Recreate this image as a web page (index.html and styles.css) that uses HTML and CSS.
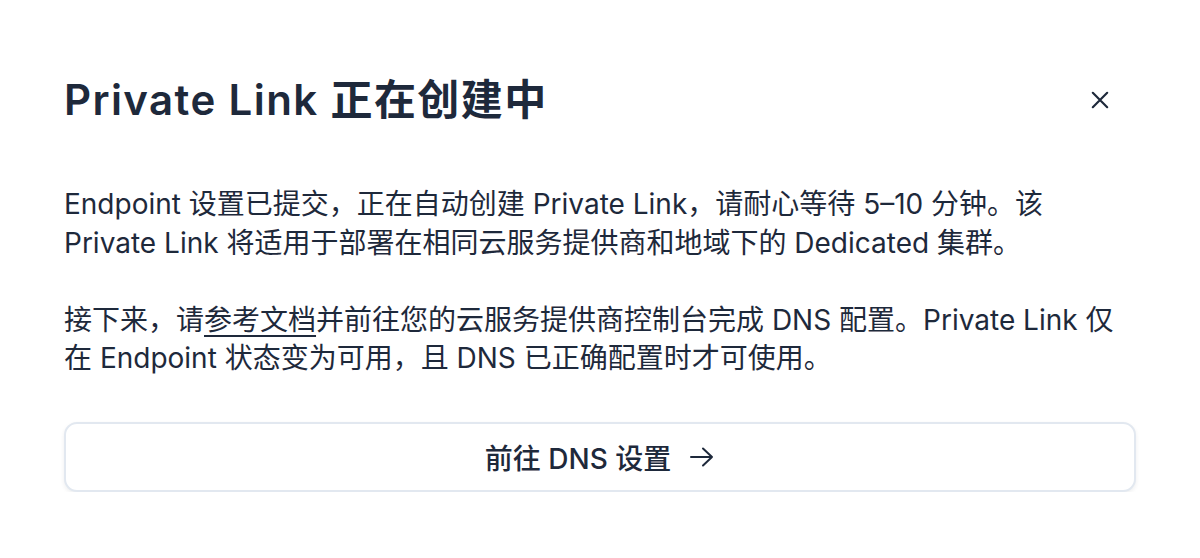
FILE: index.html
```html
<!DOCTYPE html>
<html lang="zh-CN">
<head>
<meta charset="utf-8">
<title>Private Link 正在创建中</title>
<link rel="stylesheet" href="styles.css">
</head>
<body>
<div class="dialog">
  <div class="header">
    <h1 class="title">Private Link 正在创建中</h1>
    <button class="close" aria-label="关闭">
      <svg width="20" height="20" viewBox="0 0 20 20" fill="none" stroke="currentColor" stroke-width="2.4" stroke-linecap="round"><path d="M2 2L18 18M18 2L2 18"/></svg>
    </button>
  </div>
  <div class="content">
    <p>Endpoint 设置已提交，正在自动创建 Private Link，请耐心等待 5–10 分钟。该 Private Link 将适用于部署在相同云服务提供商和地域下的 Dedicated 集群。</p>
    <p>接下来，请<a class="link" href="#">参考文档</a>并前往您的云服务提供商控制台完成 DNS 配置。Private Link 仅在 Endpoint 状态变为可用，且 DNS 已正确配置时才可使用。</p>
  </div>
  <button class="action">
    <span>前往 DNS 设置</span>
    <svg width="26" height="24" viewBox="0 0 26 24" fill="none" stroke="currentColor" stroke-width="2" stroke-linecap="round" stroke-linejoin="round"><path d="M2 12H23M14 3.5L23 12L14 20.5"/></svg>
  </button>
</div>
</body>
</html>
```
FILE: styles.css
```css
* { box-sizing: border-box; }
html, body {
  margin: 0;
  padding: 0;
  background: #ffffff;
}
body {
  font-family: Inter, "Noto Sans CJK SC", sans-serif;
  color: #1e293b;
}
.dialog {
  width: 1200px;
  padding: 0 64px;
}
.header {
  display: flex;
  align-items: center;
  justify-content: space-between;
  padding-top: 75px;
}
.title {
  margin: 0;
  font-size: 42px;
  line-height: 49px;
  font-weight: 600;
  color: #1e293b;
  letter-spacing: 1.4px;
}
.close {
  display: flex;
  align-items: center;
  justify-content: center;
  width: 42px;
  height: 42px;
  margin-right: 15px;
  padding: 0;
  border: none;
  background: transparent;
  color: #1e293b;
}
.close svg { width: 18px; height: 18px; }
.content {
  margin-top: 61px;
  display: flex;
  flex-direction: column;
  gap: 38.5px;
}
.content p {
  margin: 0;
  font-size: 28px;
  line-height: 38.5px;
  font-weight: 400;
}
.link {
  color: inherit;
  text-decoration: underline;
  text-underline-offset: 5px;
  text-decoration-thickness: 1.5px;
}
.action {
  margin-top: 44px;
  width: 100%;
  height: 70px;
  display: flex;
  align-items: center;
  justify-content: center;
  gap: 18px;
  border: 2px solid #e2e8f0;
  border-radius: 13px;
  background: #ffffff;
  box-shadow: 0 2px 4px rgba(15, 23, 42, 0.07);
  font-family: Inter, "Noto Sans CJK SC", sans-serif;
  font-size: 28px;
  font-weight: 500;
  color: #1e293b;
  padding: 0;
}
.action svg { display: block; }
```
